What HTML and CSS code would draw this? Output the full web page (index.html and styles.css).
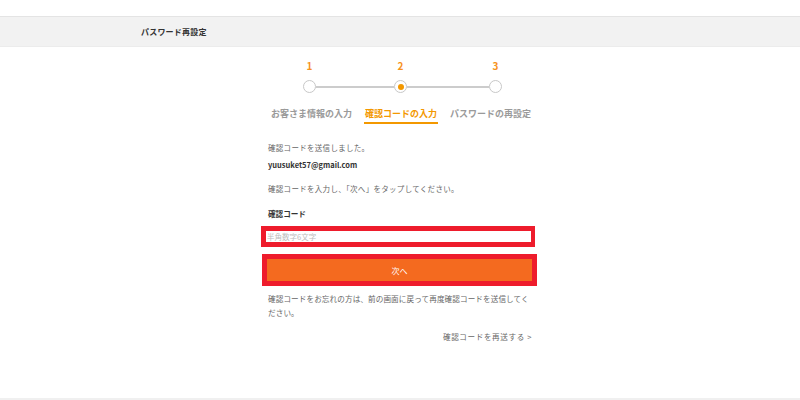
FILE: index.html
```html
<!DOCTYPE html>
<html lang="ja">
<head>
    <meta charset="UTF-8">
    <meta name="viewport" content="width=device-width, initial-scale=1.0">
    <title>パスワード再設定</title>
    <link rel="stylesheet" href="styles.css">
</head>
<body>
    <header class="page-head">
        <div class="page-head-inner">
            <h1>パスワード再設定</h1>
        </div>
    </header>

    <main class="content">
        <div class="steps">
            <span class="step-num">1</span>
            <span></span>
            <span class="step-num">2</span>
            <span></span>
            <span class="step-num">3</span>

            <span class="dot"></span>
            <span class="bar"></span>
            <span class="dot active"></span>
            <span class="bar"></span>
            <span class="dot"></span>
        </div>

        <div class="step-labels">
            <span>お客さま情報の入力</span>
            <span class="current">確認コードの入力</span>
            <span>パスワードの再設定</span>
        </div>

        <p class="note">確認コードを送信しました。</p>
        <p class="mail">yuusuket57@gmail.com</p>
        <p class="note gap">確認コードを入力し、「次へ」をタップしてください。</p>

        <label class="field-label" for="code">確認コード</label>
        <input class="code-input" type="text" id="code" placeholder="半角数字6文字">

        <button class="next-btn" type="button">次へ</button>

        <p class="help">確認コードをお忘れの方は、前の画面に戻って再度確認コードを送信してください。</p>
        <a class="resend" href="#">確認コードを再送する &gt;</a>
    </main>

    <footer class="page-foot"></footer>
</body>
</html>
```

FILE: styles.css
```css
body {
    margin: 0;
    padding: 0;
    background-color: #ffffff;
    font-family: "Noto Sans CJK JP", "Noto Sans", sans-serif;
    color: #666666;
}

.page-head {
    margin-top: 16px;
    background-color: #f2f2f2;
    border-top: 1px solid #e4e4e4;
    border-bottom: 1px solid #ececec;
}

.page-head-inner {
    width: 520px;
    margin: 0 auto;
    height: 29px;
    display: flex;
    align-items: center;
}

.page-head h1 {
    margin: 0 0 0 1px;
    font-size: 8px;
    font-weight: bold;
    letter-spacing: 0.2px;
    color: #333333;
}

.content {
    width: 264px;
    margin: 0 auto;
    display: flex;
    flex-direction: column;
    align-items: flex-start;
}

.steps {
    margin: 13px 0 0 35px;
    display: grid;
    grid-template-columns: 13px 78px 13px 82px 13px;
    grid-template-rows: 12px 13px;
    row-gap: 8px;
    align-items: center;
}

.step-num {
    text-align: center;
    font-size: 10px;
    line-height: 12px;
    font-weight: bold;
    color: #f7931e;
}

.dot {
    box-sizing: border-box;
    width: 13px;
    height: 13px;
    border: 1.5px solid #c8c8c8;
    border-radius: 50%;
    background-color: #ffffff;
    display: flex;
    align-items: center;
    justify-content: center;
}

.dot.active::after {
    content: "";
    width: 6px;
    height: 6px;
    border-radius: 50%;
    background-color: #f39800;
}

.bar {
    height: 2px;
    background-color: #cccccc;
}

.step-labels {
    margin: 15px 0 0 3px;
    display: flex;
    gap: 13px;
    font-size: 9px;
    line-height: 12px;
    font-weight: bold;
    color: #9a9a9a;
}

.step-labels .current {
    color: #f39800;
    padding: 0 1px 2px;
    margin: 0 -1px;
    border-bottom: 2px solid #f39800;
}

.note {
    margin: 18px 0 0;
    font-size: 7.5px;
    line-height: 12px;
    letter-spacing: 0.3px;
    color: #666666;
}

.note.gap {
    margin-top: 12px;
}

.mail {
    margin: 5px 0 0;
    font-size: 7.5px;
    line-height: 12px;
    font-weight: bold;
    color: #333333;
}

.field-label {
    margin-top: 13px;
    font-size: 7.6px;
    line-height: 12px;
    font-weight: bold;
    color: #333333;
}

.code-input {
    box-sizing: border-box;
    margin: 6px 0 0 -7px;
    width: 274px;
    height: 21px;
    padding: 0 1px;
    border: 5px solid #ee1c2c;
    border-right-width: 4px;
    background-color: #ffffff;
    font-family: inherit;
    font-size: 7.5px;
    color: #333333;
    outline: none;
}

.code-input::placeholder {
    color: #bdbdbd;
}

.next-btn {
    box-sizing: border-box;
    margin: 7px 0 0 -6px;
    width: 275px;
    height: 32px;
    border: 5px solid #ee1c2c;
    background-color: #f46a1f;
    color: #ffffff;
    font-family: inherit;
    font-size: 8px;
    cursor: pointer;
}

.help {
    margin: 6px 0 0;
    font-size: 7.6px;
    line-height: 14px;
    letter-spacing: 0.1px;
    color: #666666;
}

.resend {
    align-self: flex-end;
    margin-top: 11px;
    font-size: 7.6px;
    line-height: 12px;
    letter-spacing: 0.6px;
    color: #666666;
    text-decoration: none;
}

.page-foot {
    margin-top: 55px;
    height: 2px;
    background-color: #f0f0f0;
}
```
